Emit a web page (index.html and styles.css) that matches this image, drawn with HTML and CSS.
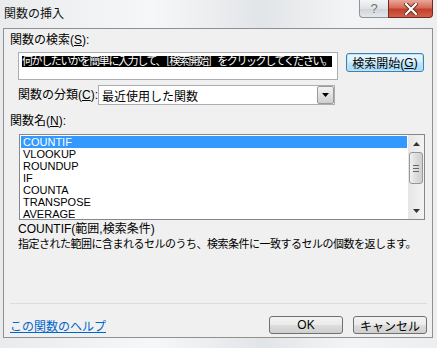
FILE: index.html
```html
<!DOCTYPE html>
<html lang="ja">
<head>
<meta charset="UTF-8">
<title>関数の挿入</title>
<link rel="stylesheet" href="styles.css">
</head>
<body>
<div class="window">
<div class="titlebar">
<div class="title">関数の挿入</div>
<div class="caption-btns">
<div class="cap-btn help-btn">?</div>
<div class="cap-btn close-btn">
<svg width="14" height="12" viewBox="0 0 14 12"><path d="M2 1 L12 11 M12 1 L2 11" stroke="#5a2a22" stroke-width="4" stroke-linecap="square"/><path d="M2 1 L12 11 M12 1 L2 11" stroke="#fff" stroke-width="2.2" stroke-linecap="square"/></svg>
</div>
</div>
</div>
<div class="panel">
<div class="label">関数の検索(<u>S</u>):</div>
<div class="search-row">
<div class="search-box"><span class="sel">何がしたいかを簡単に入力して、［検索開始］をクリックしてください。</span></div>
<div class="btn search-btn">検索開始(<u>G</u>)</div>
</div>
<div class="cat-row">
<div class="label cat-label">関数の分類(<u>C</u>):</div>
<div class="select">
<span class="select-val">最近使用した関数</span>
<div class="drop-btn"><svg width="7" height="4" viewBox="0 0 7 4"><path d="M0 0 H7 L3.5 4 Z" fill="#000"/></svg></div>
</div>
</div>
<div class="label name-label">関数名(<u>N</u>):</div>
<div class="listbox">
<div class="items">
<div class="item active">COUNTIF</div>
<div class="item">VLOOKUP</div>
<div class="item">ROUNDUP</div>
<div class="item">IF</div>
<div class="item">COUNTA</div>
<div class="item">TRANSPOSE</div>
<div class="item">AVERAGE</div>
</div>
<div class="scrollbar">
<div class="sb-arrow"><svg width="7" height="4" viewBox="0 0 7 4"><path d="M0 4 H7 L3.5 0 Z" fill="#333"/></svg></div>
<div class="sb-thumb"><span></span><span></span><span></span></div>
<div class="sb-track"></div>
<div class="sb-arrow"><svg width="7" height="4" viewBox="0 0 7 4"><path d="M0 0 H7 L3.5 4 Z" fill="#333"/></svg></div>
</div>
</div>
<div class="desc">
<div>COUNTIF(範囲,検索条件)</div>
<div class="desc-text">指定された範囲に含まれるセルのうち、検索条件に一致するセルの個数を返します。</div>
</div>
<div class="sep"></div>
<div class="footer">
<a class="help-link">この関数のヘルプ</a>
<div class="btn ok-btn">OK</div>
<div class="btn cancel-btn">キャンセル</div>
</div>
</div>
</div>
</body>
</html>
```

FILE: styles.css
```css
html,body{
margin:0px;
padding:0px;
width:437px;
height:348px;
overflow:hidden;
}
*{font-family:"Liberation Sans","Noto Sans CJK JP",sans-serif;}
body{
font-size:12px;
color:#000;
background:linear-gradient(90deg,#e9ebed 0%,#f6f7f8 35%,#e2e5e8 60%,#f3f4f5 80%,#eceef0 100%);
}
u{text-decoration:underline;text-underline-offset:1px;}
.window{
display:flex;
flex-direction:column;
width:100%;
height:100%;
}
.titlebar{
height:28px;
display:flex;
justify-content:space-between;
align-items:flex-start;
}
.title{
padding-left:4px;
line-height:28px;
font-size:12px;
color:#111;
}
.caption-btns{
display:flex;
margin-right:4px;
}
.cap-btn{
height:18px;
box-sizing:border-box;
display:flex;
align-items:center;
justify-content:center;
}
.help-btn{
width:29px;
border:1px solid #8d949c;
border-top:none;
border-right:none;
border-radius:0 0 0 4px;
background:linear-gradient(#f4f5f6,#dfe2e5 50%,#cfd3d8 51%,#e4e7ea);
color:#6b6f74;
font-size:13px;
text-shadow:0 0 1px #fff;
}
.close-btn{
width:45px;
border:1px solid #6e2a22;
border-top:none;
border-radius:0 0 4px 0;
background:linear-gradient(#e9a79a,#d66b58 45%,#c4402c 55%,#d0604c);
}
.panel{
margin:0 4px 0 3px;
height:310px;
box-sizing:border-box;
border:1px solid #8e9092;
background:#f0f0f0;
display:flex;
flex-direction:column;
}
.label{
line-height:14px;
margin-top:4px;
padding-left:6px;
}
.name-label{margin-top:9px;}
.search-row{
display:flex;
margin-top:5px;
padding-left:14px;
}
.search-box{
width:320px;
height:28px;
box-sizing:border-box;
border:1px solid #abadb3;
background:#fff;
padding:1px 0 0 3px;
}
.sel{
background:#000;
color:#fff;
font-size:11px;
line-height:11px;
letter-spacing:-1.4px;
display:inline-block;
white-space:nowrap;
}
.btn{
height:19px;
box-sizing:border-box;
border:1px solid #707070;
border-radius:3px;
background:linear-gradient(#f3f3f3,#ebebeb 48%,#dddddd 52%,#cfcfcf);
display:flex;
align-items:center;
justify-content:center;
}
.search-btn{
width:78px;
margin-left:8px;
margin-top:1px;
border-color:#3c7fb1;
box-shadow:inset 0 0 0 1px #bfe3f7;
background:linear-gradient(#eaf6fd,#d9f0fc 48%,#bee6fd 52%,#a7d9f5);
}
.cat-row{
display:flex;
align-items:center;
margin-top:5px;
padding-left:14px;
}
.cat-label{
margin-top:0px;
padding-left:0px;
width:80px;
}
.select{
width:237px;
height:20px;
box-sizing:border-box;
border:1px solid #abadb3;
background:#fff;
display:flex;
align-items:center;
justify-content:space-between;
padding-left:3px;
}
.drop-btn{
width:17px;
height:18px;
box-sizing:border-box;
border:1px solid #9a9a9a;
border-radius:2px;
background:linear-gradient(#f2f2f2,#e0e0e0 50%,#cfcfcf);
display:flex;
align-items:center;
justify-content:center;
}
.listbox{
margin:6px 0 0 15px;
width:406px;
height:86px;
box-sizing:border-box;
border:1px solid #828790;
background:#fff;
display:flex;
}
.items{
flex-grow:1;
padding:1px 1px 0 1px;
}
.item{
height:12px;
line-height:12px;
font-size:11px;
padding-left:2px;
}
.item.active{
background:#3399ff;
color:#fff;
}
.scrollbar{
width:16px;
display:flex;
flex-direction:column;
align-items:center;
background:linear-gradient(90deg,#e6e6e6,#f3f3f3);
}
.sb-arrow{
height:17px;
width:100%;
display:flex;
align-items:center;
justify-content:center;
}
.sb-thumb{
width:14px;
height:32px;
box-sizing:border-box;
border:1px solid #979797;
border-radius:3px;
background:linear-gradient(90deg,#f1f1f1,#dcdcdc 50%,#cfcfcf);
display:flex;
flex-direction:column;
align-items:center;
justify-content:center;
gap:2px;
}
.sb-thumb span{
width:6px;
height:1px;
background:#666;
}
.sb-track{flex-grow:1;}
.desc{
margin:2px 0 0 14px;
line-height:15px;
}
.desc-text{
font-size:11px;
letter-spacing:-0.5px;
}
.sep{
margin:auto 5px 0 6px;
height:1px;
background:#d8dde2;
}
.footer{
display:flex;
align-items:center;
margin-top:12px;
padding:0 5px 3px 6px;
}
.help-link{
color:#0066cc;
text-decoration:underline;
margin-right:auto;
}
.ok-btn,.cancel-btn{
width:74px;
height:18px;
}
.cancel-btn{margin-left:10px;}
```
